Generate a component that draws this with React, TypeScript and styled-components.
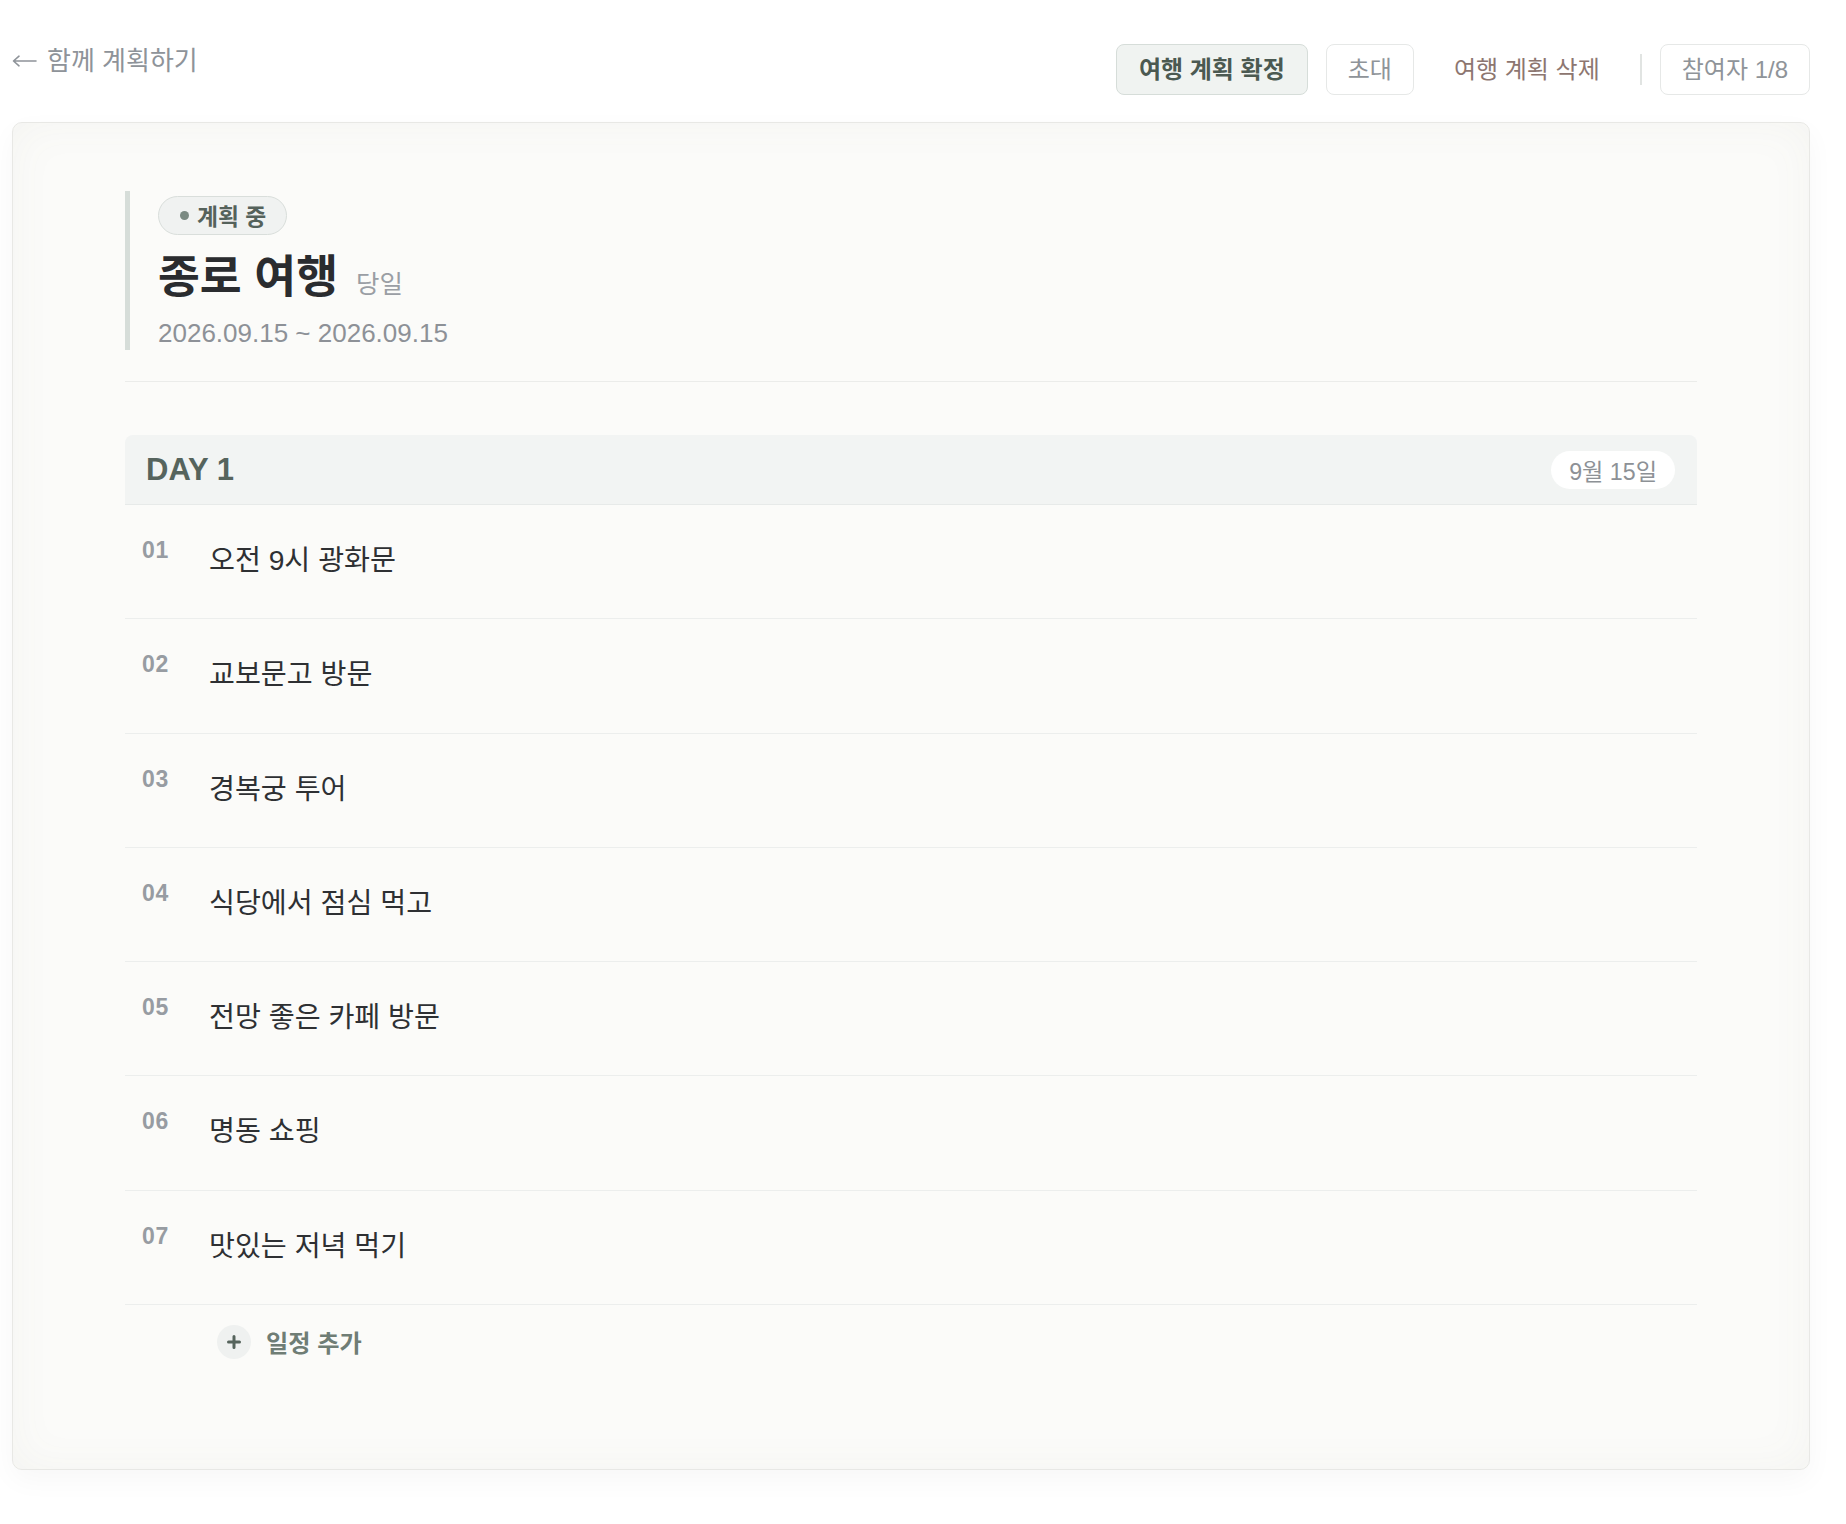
import React from "react";
import styled, { createGlobalStyle, css } from "styled-components";

const GlobalStyle = createGlobalStyle`
  html, body {
    margin: 0;
    padding: 0;
    background: #ffffff;
  }
  body {
    font-family: "Liberation Sans", "Noto Sans CJK KR", sans-serif;
    color: #2e3033;
    -webkit-font-smoothing: antialiased;
  }
  * { box-sizing: border-box; }
`;

const Page = styled.div`
  padding: 44px 36px 54px 12px;
`;

const TopBar = styled.header`
  display: flex;
  justify-content: space-between;
  align-items: flex-start;
  margin-bottom: 27px;
`;

const BackLink = styled.a`
  display: inline-flex;
  align-items: center;
  gap: 10px;
  font-size: 26px;
  line-height: 34px;
  color: #8e9399;
  text-decoration: none;
  cursor: pointer;
`;

const Actions = styled.nav`
  display: flex;
  align-items: center;
  gap: 18px;
`;

type Variant = "primary" | "outline" | "danger";

const ActionButton = styled.button<{ $variant: Variant }>`
  height: 51px;
  padding: 0 21px;
  border-radius: 8px;
  font-family: "Liberation Sans", "Noto Sans CJK KR", sans-serif;
  font-size: 24px;
  line-height: 1;
  cursor: pointer;
  white-space: nowrap;
  ${({ $variant }) =>
    $variant === "primary"
      ? css`
          padding: 0 22px;
          background: #f0f3f1;
          border: 1px solid #d6ddd9;
          color: #4b5951;
          font-weight: 700;
        `
      : $variant === "outline"
      ? css`
          background: #ffffff;
          border: 1px solid #e6e8e7;
          color: #8f9499;
          font-weight: 400;
        `
      : css`
          background: transparent;
          border: 1px solid transparent;
          color: #8d7670;
          font-weight: 400;
        `}
`;

const Separator = styled.span`
  width: 2px;
  height: 31px;
  background: #e1e4e2;
`;

const Card = styled.main`
  border: 1px solid #e8e8e5;
  border-radius: 10px;
  background: #fbfbf9;
  padding: 68px 112px 109.5px;
  box-shadow: inset 0 0 44px rgba(120, 120, 100, 0.05),
    0 10px 28px rgba(0, 0, 0, 0.035);
`;

const PlanHeader = styled.section`
  padding-bottom: 31px;
  border-bottom: 1px solid #ebecea;
`;

const TitleBlock = styled.div`
  border-left: 5px solid #d6ddd9;
  padding: 5px 0 0 28px;
`;

const StatusBadge = styled.span`
  display: inline-flex;
  align-items: center;
  gap: 8px;
  height: 39px;
  padding: 0 20px 0 21px;
  border-radius: 20px;
  background: #f0f2f1;
  border: 1px solid #d9dedb;
  color: #55625b;
  font-size: 22.8px;
  font-weight: 700;
`;

const Dot = styled.span`
  width: 9px;
  height: 9px;
  border-radius: 50%;
  background: #7b8a82;
`;

const Title = styled.h1`
  margin: 17px 0 0;
  font-size: 45.5px;
  line-height: 52px;
  font-weight: 700;
  color: #2a2c2f;
`;

const Duration = styled.span`
  margin-left: 18px;
  font-size: 25.5px;
  font-weight: 400;
  color: #9a9ea4;
`;

const Dates = styled.div`
  margin-top: 6px;
  font-size: 26px;
  line-height: 34px;
  color: #8d9197;
`;

const DaySection = styled.section`
  margin-top: 53px;
`;

const DayHeader = styled.div`
  display: flex;
  align-items: center;
  justify-content: space-between;
  height: 70px;
  padding: 0 22px 0 21px;
  background: #f2f4f3;
  border-radius: 8px 8px 0 0;
  border-bottom: 1px solid #e7eae9;
`;

const DayLabel = styled.h2`
  margin: 0;
  font-size: 31px;
  line-height: 69px;
  font-weight: 700;
  color: #56645d;
`;

const DatePill = styled.span`
  display: inline-flex;
  align-items: center;
  height: 38px;
  padding: 0 18px;
  border-radius: 19px;
  background: #ffffff;
  color: #8d9196;
  font-size: 23.2px;
`;

const ItemList = styled.ol`
  list-style: none;
  margin: 0;
  padding: 0;
`;

const ItemRow = styled.li`
  display: flex;
  align-items: flex-start;
  padding: 32px 17px 35.3px;
  border-bottom: 1px solid #eceeed;
`;

const ItemNumber = styled.span`
  flex: 0 0 67px;
  font-size: 23px;
  line-height: 26px;
  font-weight: 700;
  letter-spacing: 0.8px;
  color: #979ca2;
`;

const ItemText = styled.span`
  font-size: 28.2px;
  line-height: 46px;
  color: #2e3033;
`;

const AddRow = styled.div`
  padding: 19px 0 0 92px;
`;

const AddButton = styled.button`
  display: inline-flex;
  align-items: center;
  gap: 15px;
  padding: 0;
  border: none;
  background: transparent;
  cursor: pointer;
  font-family: "Liberation Sans", "Noto Sans CJK KR", sans-serif;
  font-size: 24.2px;
  font-weight: 700;
  color: #6f7d75;
`;

const PlusCircle = styled.span`
  display: inline-flex;
  align-items: center;
  justify-content: center;
  width: 34px;
  height: 34px;
  border-radius: 50%;
  background: #eff1f0;
`;

const items = [
  "오전 9시 광화문",
  "교보문고 방문",
  "경복궁 투어",
  "식당에서 점심 먹고",
  "전망 좋은 카페 방문",
  "명동 쇼핑",
  "맛있는 저녁 먹기",
];

export default function App() {
  return (
    <>
      <GlobalStyle />
      <Page>
        <TopBar>
          <BackLink>
            <svg width="25" height="14" viewBox="0 0 25 14" aria-hidden="true">
              <path
                d="M24 7H1.5M1.5 7L7 2.2M1.5 7L7 11.8"
                stroke="#8e9399"
                strokeWidth="1.6"
                fill="none"
                strokeLinecap="round"
              />
            </svg>
            함께 계획하기
          </BackLink>
          <Actions>
            <ActionButton $variant="primary">여행 계획 확정</ActionButton>
            <ActionButton $variant="outline">초대</ActionButton>
            <ActionButton $variant="danger">여행 계획 삭제</ActionButton>
            <Separator />
            <ActionButton $variant="outline">참여자 1/8</ActionButton>
          </Actions>
        </TopBar>
        <Card>
          <PlanHeader>
            <TitleBlock>
              <StatusBadge>
                <Dot />
                계획 중
              </StatusBadge>
              <Title>
                종로 여행<Duration>당일</Duration>
              </Title>
              <Dates>2026.09.15 ~ 2026.09.15</Dates>
            </TitleBlock>
          </PlanHeader>
          <DaySection>
            <DayHeader>
              <DayLabel>DAY 1</DayLabel>
              <DatePill>9월 15일</DatePill>
            </DayHeader>
            <ItemList>
              {items.map((text, i) => (
                <ItemRow key={text}>
                  <ItemNumber>{String(i + 1).padStart(2, "0")}</ItemNumber>
                  <ItemText>{text}</ItemText>
                </ItemRow>
              ))}
            </ItemList>
            <AddRow>
              <AddButton>
                <PlusCircle>
                  <svg width="14" height="14" viewBox="0 0 14 14" aria-hidden="true">
                    <path
                      d="M7 1.5v11M1.5 7h11"
                      stroke="#56645c"
                      strokeWidth="3"
                      strokeLinecap="round"
                    />
                  </svg>
                </PlusCircle>
                일정 추가
              </AddButton>
            </AddRow>
          </DaySection>
        </Card>
      </Page>
    </>
  );
}
